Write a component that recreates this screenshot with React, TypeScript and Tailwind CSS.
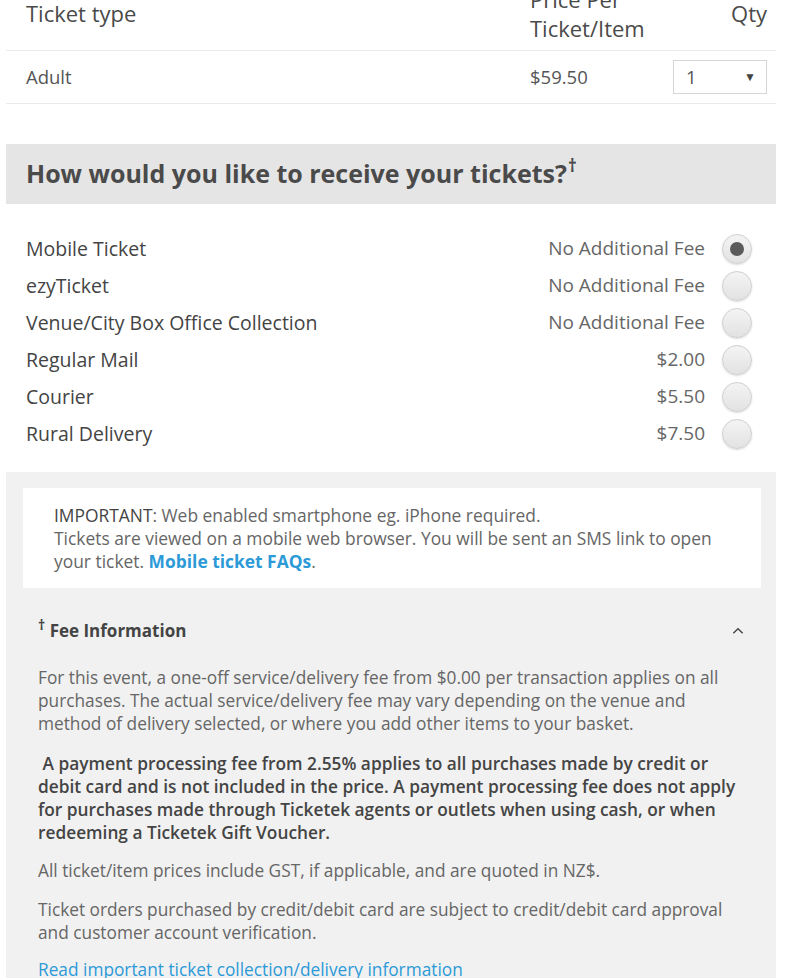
const options = [
  { name: "Mobile Ticket", fee: "No Additional Fee", selected: true },
  { name: "ezyTicket", fee: "No Additional Fee", selected: false },
  { name: "Venue/City Box Office Collection", fee: "No Additional Fee", selected: false },
  { name: "Regular Mail", fee: "$2.00", selected: false },
  { name: "Courier", fee: "$5.50", selected: false },
  { name: "Rural Delivery", fee: "$7.50", selected: false },
];

function Radio({ selected }: { selected: boolean }) {
  return (
    <div className="w-[30px] h-[30px] rounded-full border border-[#d0d0d0] bg-gradient-to-b from-[#f4f4f4] to-[#e2e2e2] shadow-[0_1px_2px_rgba(0,0,0,0.15)] flex items-center justify-center">
      {selected && <div className="w-[14px] h-[14px] rounded-full bg-[#5a5a5a]" />}
    </div>
  );
}

export default function App() {
  return (
    <div className="bg-white min-h-screen overflow-hidden font-['Open_Sans',sans-serif] text-[#555]">
      <div className="ml-[6px] w-[770px]">
        {/* ticket table */}
        <div className="border-b border-[#ebebeb] pb-[7px]">
          <div className="mt-[-16px] h-[59px] flex items-center text-[22px] leading-[29px] text-[#4a4a4a]">
            <div className="flex-1 pl-[20px]">Ticket type</div>
            <div className="w-[152px]">
              Price Per
              <br />
              Ticket/Item
            </div>
            <div className="w-[94px] text-right pr-[9px]">Qty</div>
          </div>
        </div>
        <div className="border-b border-[#ebebeb] h-[53px] flex items-center text-[18.5px]">
          <div className="flex-1 pl-[20px]">Adult</div>
          <div className="w-[143px]">$59.50</div>
          <div className="w-[94px] h-[34px] mr-[9px] border border-[#d6d6d6] flex items-center justify-between pl-[12px] pr-[10px] text-[#555]">
            <span>1</span>
            <span className="text-[12px] text-[#444]">▼</span>
          </div>
        </div>

        {/* delivery heading */}
        <div className="mt-[40px] h-[60px] bg-[#e5e5e5] flex items-center pl-[20px]">
          <h2 className="text-[25px] font-bold text-[#4a4a4a] leading-[30px] mt-[-3px]">
            How would you like to receive your tickets?<sup className="text-[17px] top-[-0.6em] ml-[1px]">†</sup>
          </h2>
        </div>

        <div className="pt-[26px] pb-[20px]">
          {options.map((o) => (
            <div key={o.name} className="h-[37px] flex items-center pl-[20px] pr-[24px]">
              <div className="flex-1 font-medium text-[19.5px] text-[#444]">{o.name}</div>
              <div className="text-[19px] text-[#666] mr-[17px]">{o.fee}</div>
              <Radio selected={o.selected} />
            </div>
          ))}
        </div>

        {/* info panel */}
        <div className="bg-[#f1f1f1] pt-[16px] pb-[20px]">
          <div className="ml-[17px] mr-[15px] bg-white pl-[31px] pr-[30px] py-[15.5px] text-[17.4px] leading-[23px] text-[#666]">
            <span className="text-[#444] font-medium">IMPORTANT</span>: Web enabled smartphone eg. iPhone required.
            <br />
            Tickets are viewed on a mobile web browser. You will be sent an SMS link to open your ticket.{" "}
            <a className="font-bold text-[#2d9ad8]">Mobile ticket FAQs</a>.
          </div>

          <div className="mt-[31px] pl-[32px] pr-[30px] flex items-center justify-between leading-[23px]">
            <div className="text-[17px] font-bold text-[#444]">
              <sup className="text-[14px] top-[-0.5em]">†</sup> Fee Information
            </div>
            <svg className="w-[16px] h-[16px] mr-[0px]" viewBox="0 0 24 24" fill="none" stroke="#444" strokeWidth={2}>
              <path d="M5 15.5l7-7 7 7" />
            </svg>
          </div>

          <div className="mt-[24px] pl-[32px] pr-[36px] text-[17.3px] leading-[23px] text-[#666]">
            <p className="mb-[17px]">
              For this event, a one-off service/delivery fee from $0.00 per transaction applies on all purchases. The actual service/delivery fee may vary depending on the venue and method of delivery selected, or where you add other items to your basket.
            </p>
            <p className="mb-[15px] font-semibold text-[#444]">
              &nbsp;A payment processing fee from 2.55% applies to all purchases made by credit or debit card and is not included in the price. A payment processing fee does not apply for purchases made through Ticketek agents or outlets when using cash, or when redeeming a Ticketek Gift Voucher.
            </p>
            <p className="mb-[16px]">All ticket/item prices include GST, if applicable, and are quoted in NZ$.</p>
            <p className="mb-[14px]">
              Ticket orders purchased by credit/debit card are subject to credit/debit card approval and customer account verification.
            </p>
            <a className="text-[#2d9ad8]">Read important ticket collection/delivery information</a>
          </div>
        </div>
      </div>
    </div>
  );
}
